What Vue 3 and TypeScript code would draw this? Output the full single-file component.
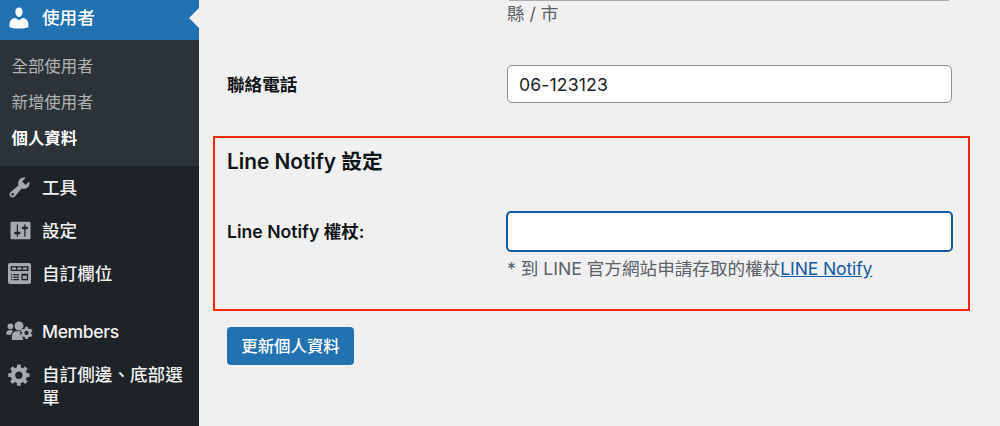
<script setup lang="ts">
import { ref } from 'vue'

interface MenuItem {
  label: string
  icon: string
  gap?: boolean
}

const submenu: { label: string; active: boolean }[] = [
  { label: '全部使用者', active: false },
  { label: '新增使用者', active: false },
  { label: '個人資料', active: true },
]

const items: MenuItem[] = [
  { label: '工具', icon: 'tools' },
  { label: '設定', icon: 'settings' },
  { label: '自訂欄位', icon: 'fields' },
  { label: 'Members', icon: 'members', gap: true },
  { label: '自訂側邊、底部選單', icon: 'gear' },
]

const paths: Record<string, string> = {
  tools:
    'M16.68 9.77c-1.34 1.34-3.3 1.67-4.95.99l-5.41 6.52c-.99.99-2.59.99-3.58 0s-.99-2.59 0-3.57l6.52-5.42c-.68-1.65-.35-3.61.99-4.95 1.28-1.28 3.12-1.62 4.72-1.06l-2.89 2.89 2.82 2.82 2.86-2.87c.53 1.58.18 3.39-1.08 4.65zM3.81 16.21c.4.39 1.04.39 1.43 0 .4-.4.4-1.04 0-1.43-.39-.4-1.03-.4-1.43 0-.39.39-.39 1.03 0 1.43z',
  settings:
    'M18 16V4c0-.55-.45-1-1-1H3c-.55 0-1 .45-1 1v12c0 .55.45 1 1 1h14c.55 0 1-.45 1-1zM8 11h1c.55 0 1 .45 1 1s-.45 1-1 1H8v1.5c0 .28-.22.5-.5.5s-.5-.22-.5-.5V13H6c-.55 0-1-.45-1-1s.45-1 1-1h1V5.5c0-.28.22-.5.5-.5s.5.22.5.5V11zm5-2h-1c-.55 0-1-.45-1-1s.45-1 1-1h1V5.5c0-.28.22-.5.5-.5s.5.22.5.5V7h1c.55 0 1 .45 1 1s-.45 1-1 1h-1v5.5c0 .28-.22.5-.5.5s-.5-.22-.5-.5V9z',
  gear:
    'M18 12h-2.18c-.17.7-.44 1.35-.81 1.93l1.54 1.54-2.1 2.1-1.54-1.54c-.58.36-1.23.63-1.91.79V19H8v-2.18c-.68-.16-1.33-.43-1.91-.79l-1.54 1.54-2.12-2.12 1.54-1.54c-.36-.58-.63-1.23-.79-1.91H1V9.03h2.17c.16-.7.44-1.35.8-1.94L2.43 5.55l2.1-2.1 1.54 1.54c.58-.37 1.24-.64 1.93-.81V2h3v2.18c.68.16 1.33.43 1.91.79l1.54-1.54 2.12 2.12-1.54 1.54c.36.59.64 1.24.8 1.94H18V12zm-8.5 1.5c1.66 0 3-1.34 3-3s-1.34-3-3-3-3 1.34-3 3 1.34 3 3 3z',
}

const phone = ref('06-123123')
const token = ref('')
</script>

<template>
  <div class="page">
    <nav class="sidebar">
      <a class="item current">
        <span class="icon">
          <svg width="26" height="26" viewBox="0 0 20 20" fill="currentColor">
            <path d="M10 9.25c-2.27 0-2.73-3.44-2.73-3.44C7 4.02 7.82 2 9.97 2c2.16 0 2.98 2.02 2.71 3.81 0 0-.41 3.44-2.68 3.44zm0 2.57L12.72 10c2.39 0 4.52 2.33 4.52 4.53v2.49s-3.65 1.13-7.24 1.13c-3.65 0-7.24-1.13-7.24-1.13v-2.49c0-2.25 1.94-4.48 4.47-4.48z" />
          </svg>
        </span>
        <span class="label">使用者</span>
        <span class="arrow"></span>
      </a>
      <ul class="submenu">
        <li v-for="s in submenu" :key="s.label" :class="{ active: s.active }">{{ s.label }}</li>
      </ul>
      <a v-for="i in items" :key="i.icon" class="item" :class="{ gap: i.gap }">
        <span class="icon" :class="i.icon">
          <svg v-if="i.icon === 'fields'" width="23" height="21" viewBox="0 0 23 21">
            <rect width="23" height="21" rx="2" fill="currentColor" />
            <g fill="#1d2327">
              <rect x="2.7" y="3.2" width="17.8" height="4.8" />
              <rect x="3" y="11.1" width="1.3" height="1.2" />
              <rect x="3" y="13.6" width="1.3" height="1.2" />
              <rect x="3" y="16" width="1.3" height="1.2" />
              <rect x="5.4" y="11.1" width="5.6" height="1.2" />
              <rect x="5.4" y="13.6" width="5.6" height="1.2" />
              <rect x="5.4" y="16" width="5.6" height="1.2" />
              <rect x="13.4" y="10.7" width="6.7" height="6.6" />
            </g>
            <g fill="currentColor">
              <rect x="4" y="4.5" width="4" height="2.2" />
              <rect x="9.4" y="4.5" width="4" height="2.2" />
              <rect x="14.9" y="4.5" width="4" height="2.2" />
              <rect x="14.7" y="12.7" width="4.1" height="3.2" />
            </g>
          </svg>
          <svg v-else-if="i.icon === 'members'" width="27" height="20" viewBox="0 0 27 20">
            <g fill="currentColor">
              <circle cx="4.4" cy="5.4" r="2.8" />
              <path d="M.4 13.6V12c0-1.7 1.2-2.8 2.8-2.8h2.4c.8 0 1.2.2 1.7.6-1.1.8-1.9 2-2.2 4H1.2c-.5 0-.8.1-.8-.2z" />
              <circle cx="13" cy="5" r="4.5" />
              <path d="M5.9 17.9v-2.7c0-2.9 2-4.9 4.8-4.9H17v8.6H6.9c-.6 0-1-.4-1-1z" />
            </g>
            <circle cx="20.5" cy="11.9" r="6.3" fill="#1d2327" />
            <g fill="currentColor">
              <circle cx="20.5" cy="11.9" r="4.7" />
              <rect v-for="a in 3" :key="a" x="19" y="5.8" width="3" height="12.2" rx=".5" :transform="`rotate(${a * 60} 20.5 11.9)`" />
            </g>
            <circle cx="20.5" cy="11.9" r="2.1" fill="#1d2327" />
          </svg>
          <svg v-else width="25" height="25" viewBox="0 0 20 20" fill="currentColor">
            <path :d="paths[i.icon]" />
          </svg>
        </span>
        <span class="label" :class="i.icon">{{ i.label }}</span>
      </a>
    </nav>

    <main class="content">
      <div class="previous">
        <div class="select-edge"></div>
        <p class="hint">縣 / 市</p>
      </div>
      <div class="row phone">
        <label for="phone">聯絡電話</label>
        <input id="phone" v-model="phone" type="text" />
      </div>
      <section class="notify">
        <h2>Line Notify 設定</h2>
        <div class="row">
          <label for="token">Line Notify 權杖:</label>
          <input id="token" v-model="token" class="focused" type="text" />
        </div>
        <p class="hint">* 到 LINE 官方網站申請存取的權杖<a>LINE Notify</a></p>
      </section>
      <button type="button">更新個人資料</button>
    </main>
  </div>
</template>

<style>
body {
  margin: 0;
  overflow: hidden;
}
</style>

<style scoped>
.page {
  display: flex;
  width: 1000px;
  height: 426px;
  overflow: hidden;
  background: #f0f0f0;
  color: #1d2327;
  font-family: Inter, "Noto Sans CJK TC", sans-serif;
  font-size: 17.6px;
}
.sidebar {
  box-sizing: border-box;
  width: 199px;
  flex: none;
  background: #1d2327;
  color: #f0f0f1;
}
.item {
  position: relative;
  display: flex;
  min-height: 43.4px;
}
.item.gap {
  margin-top: 14px;
}
.icon {
  box-sizing: border-box;
  display: flex;
  width: 38px;
  height: 42.6px;
  flex: none;
  align-items: center;
  justify-content: center;
  color: #a7aaad;
}
.icon.settings {
  padding-left: 2px;
}
.icon.fields {
  height: 41.6px;
  padding-left: 1px;
}
.label {
  width: 146px;
  margin-left: 4px;
  padding-top: 9.3px;
  line-height: 23px;
}
.label.tools {
  padding-top: 10px;
}
.label.members {
  padding-top: 10px;
  letter-spacing: -0.4px;
}
.icon + .label {
  font-weight: 500;
}
.item.current {
  height: 39.5px;
  min-height: 0;
  background: #2271b1;
  color: #fff;
}
.current .icon {
  height: 35px;
  color: #fff;
}
.current .label {
  padding-top: 5.5px;
}
.arrow {
  position: absolute;
  top: 7.5px;
  right: 0;
  border: 10px solid transparent;
  border-left: 0;
  border-right-color: #f0f0f0;
}
.submenu {
  box-sizing: border-box;
  height: 126.5px;
  margin: 0;
  padding: 8.5px 11.5px 0;
  list-style: none;
  background: #2c3338;
  color: #b0b3b6;
  font-size: 16.4px;
  line-height: 36px;
}
.submenu .active {
  color: #fff;
  font-weight: 700;
}
.content {
  flex: 1;
  padding-left: 28px;
}
.previous {
  height: 65px;
  padding-left: 280px;
}
.select-edge {
  width: 440px;
  height: 1px;
  margin-left: 2px;
  background: #a9adb3;
}
.hint {
  margin: 0;
  color: #5b6168;
  line-height: 26px;
}
.row {
  display: flex;
  align-items: center;
}
label {
  width: 280px;
  margin-top: -2px;
  color: #101518;
  font-weight: 600;
}
input {
  box-sizing: border-box;
  width: 445px;
  height: 38px;
  padding: 0 11px;
  border: 1px solid #8c8f94;
  border-radius: 5px;
  outline: none;
  background: #fff;
  color: #1d2327;
  font: inherit;
  letter-spacing: 0.15px;
}
input.focused {
  width: 447px;
  height: 41px;
  margin-left: -1px;
  border: 2px solid #135ba5;
}
.notify {
  box-sizing: border-box;
  width: 757px;
  height: 175px;
  margin: 33px 0 0 -14px;
  padding: 10px 0 0 12px;
  border: 2px solid #ff2600;
}
h2 {
  margin: 0 0 35px;
  color: #101518;
  font-size: 20.8px;
  font-weight: 600;
  line-height: 28px;
}
.notify .hint {
  margin-top: 4px;
  padding-left: 280px;
  white-space: nowrap;
}
.notify a {
  color: #135ba5;
  letter-spacing: -0.15px;
  text-decoration: underline;
}
button {
  display: block;
  width: 127px;
  height: 38px;
  margin-top: 16px;
  padding: 0 0 2px;
  border: 0;
  border-radius: 4px;
  background: #2271b1;
  color: #fff;
  font: inherit;
  font-size: 16.4px;
  font-weight: 500;
}
</style>
